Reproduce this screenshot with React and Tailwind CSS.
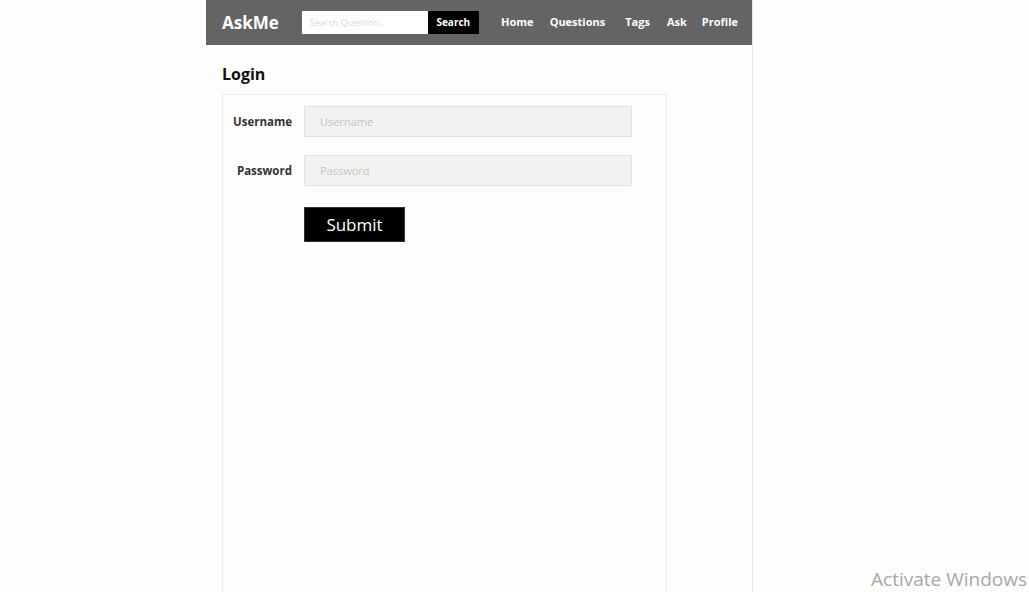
import React from "react";

const App = () => {
  return (
    <div className="relative h-screen overflow-hidden bg-[#fdfdfb] font-['Open_Sans',sans-serif]">
      <div className="ml-[206px] flex h-full w-[547px] flex-col border-r border-[#e6e6e4]">
        {/* Top bar */}
        <nav className="flex h-[45px] shrink-0 items-center bg-[#646464] pl-4 pr-[14px]">
          <span className="text-[17px] font-bold text-white">AskMe</span>
          <div className="ml-[23px] flex h-[23px] items-stretch">
            <input
              type="text"
              placeholder="Search Question.."
              className="w-[126px] bg-white px-2 text-[9px] text-gray-700 outline-none placeholder:text-[#d8d8d8]"
            />
            <button className="w-[51px] bg-black text-[10px] font-bold text-white">Search</button>
          </div>
          <ul className="ml-auto flex items-center text-[11px] font-bold text-white">
            <li>Home</li>
            <li className="ml-[16px]">Questions</li>
            <li className="ml-[20px]">Tags</li>
            <li className="ml-[17px]">Ask</li>
            <li className="ml-[15px]">Profile</li>
          </ul>
        </nav>

        {/* Content */}
        <div className="flex flex-1 flex-col pl-4">
          <h2 className="mt-[18px] text-[16px] font-bold leading-[22px] text-[#111]">Login</h2>
          <form className="mt-[9px] flex-1 w-[445px] border border-b-0 border-[#ececea] pt-[11px]">
            <div className="flex items-center">
              <label className="w-[69px] text-right text-[11.5px] font-bold text-[#333]">Username</label>
              <input
                type="text"
                placeholder="Username"
                className="ml-[12px] h-[31px] w-[328px] border border-[#e2e2e0] bg-[#f2f2f0] px-[15px] text-[11px] outline-none placeholder:text-[#c4c4c2]"
              />
            </div>
            <div className="mt-[18px] flex items-center">
              <label className="w-[69px] text-right text-[11.5px] font-bold text-[#333]">Password</label>
              <input
                type="password"
                placeholder="Password"
                className="ml-[12px] h-[31px] w-[328px] border border-[#e2e2e0] bg-[#f2f2f0] px-[15px] text-[11px] outline-none placeholder:text-[#c4c4c2]"
              />
            </div>
            <button
              type="button"
              className="ml-[81px] mt-[21px] h-[35px] w-[101px] border border-[#333] bg-black text-[17px] text-white"
            >
              Submit
            </button>
          </form>
        </div>
      </div>

      {/* Windows watermark */}
      <div className="absolute bottom-[0px] right-[2px] text-[19px] leading-[26px] text-[#a8a8a8]">Activate Windows</div>
    </div>
  );
};

export default App;
